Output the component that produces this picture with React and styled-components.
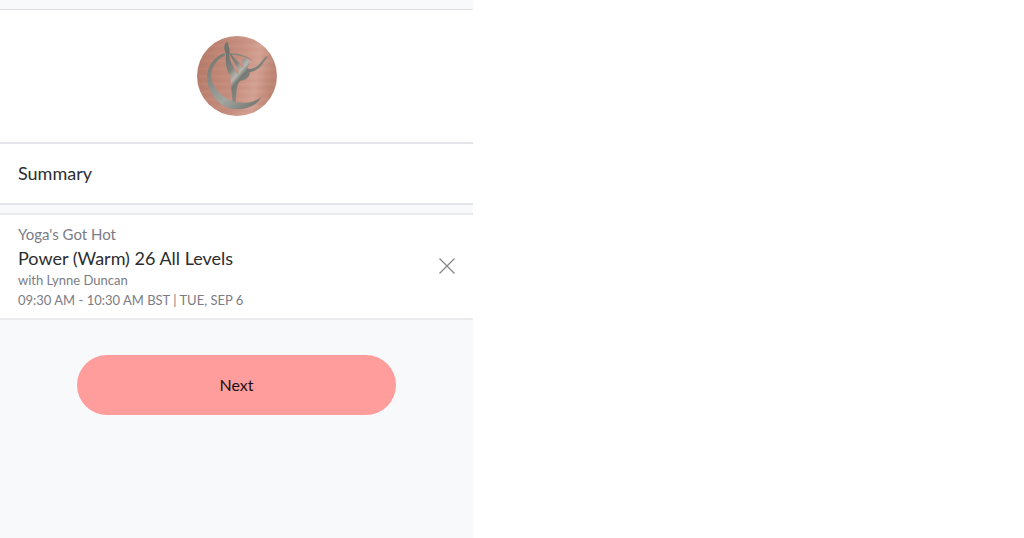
import React from 'react';
import styled, { createGlobalStyle } from 'styled-components';


const GlobalStyle = createGlobalStyle`
    body {
        margin: 0;
        background: #ffffff;
        font-family: Lato, "Open Sans", sans-serif;
        color: #2c2d30;
    }
`

const Page = styled.div`
    display: grid;
    grid-template-columns: minmax(320px, 46.2%) 1fr;
    min-height: 100vh;
`

const Checkout = styled.main`
    display: flex;
    flex-direction: column;
    padding-top: 9px;
    background: #f7f9fb;
`

const Header = styled.header`
    display: flex;
    justify-content: center;
    padding: 26px 18px;
    background: #ffffff;
    border-top: 1px solid #dcdee1;
    border-bottom: 2px solid #e3e5e8;
`

const Logo = styled.svg`
    display: block;
    width: 80px;
    height: 80px;
`

const Heading = styled.h1`
    margin: 0 0 8px;
    padding: 17px 18px 18px;
    background: #ffffff;
    border-bottom: 2px solid #e3e5e8;
    font-size: 18px;
    font-weight: 400;
    line-height: 24px;
`

const Booking = styled.section`
    display: flex;
    align-items: center;
    justify-content: space-between;
    padding: 7px 18px 8px;
    background: #ffffff;
    border-top: 2px solid #e8eaec;
    border-bottom: 2px solid #e8eaec;
`

const Studio = styled.p`
    margin: 0;
    color: #7b7c85;
    font-size: 15px;
    line-height: 24px;
`

const ClassName = styled.h2`
    margin: 0;
    font-size: 18px;
    font-weight: 400;
    line-height: 24px;
`

const Detail = styled.p`
    margin: 0;
    color: #7b7c85;
    font-size: 13px;
    line-height: 20px;
`

const RemoveButton = styled.button`
    display: flex;
    padding: 0;
    border: 0;
    background: none;
    color: #85868a;
    cursor: pointer;
`

const NextButton = styled.button`
    width: 67.4%;
    margin: 35px auto 0;
    padding: 18px;
    border: 0;
    border-radius: 30px;
    background: #ff9d9d;
    color: #1b1214;
    font-family: inherit;
    font-size: 16px;
    line-height: 24px;
    cursor: pointer;
    &:hover {
        background: #ff8f8f;
    }
`

function StudioLogo() {
    return (
        <Logo viewBox="30 31 240 240" role="img" aria-label="Yoga's Got Hot">
            <defs>
                <linearGradient id="copper" x1="0" y1="0" x2="1" y2="0.15">
                    <stop offset="0" stopColor="#b27866" />
                    <stop offset="0.3" stopColor="#c08675" />
                    <stop offset="0.55" stopColor="#c68f7f" />
                    <stop offset="0.8" stopColor="#d3a192" />
                    <stop offset="1" stopColor="#bd8573" />
                </linearGradient>
                <linearGradient id="steel" gradientUnits="userSpaceOnUse" x1="70" y1="90" x2="210" y2="250">
                    <stop offset="0" stopColor="#74766f" />
                    <stop offset="0.35" stopColor="#8e918b" />
                    <stop offset="0.6" stopColor="#a3a59f" />
                    <stop offset="0.8" stopColor="#8a8d87" />
                    <stop offset="1" stopColor="#6f726c" />
                </linearGradient>
                <linearGradient id="body" gradientUnits="userSpaceOnUse" x1="115" y1="100" x2="190" y2="165">
                    <stop offset="0" stopColor="#72756f" />
                    <stop offset="0.35" stopColor="#82857f" />
                    <stop offset="0.58" stopColor="#b6b8b1" />
                    <stop offset="0.72" stopColor="#777a74" />
                    <stop offset="1" stopColor="#858781" />
                </linearGradient>
                <pattern id="brushed" width="240" height="23" patternUnits="userSpaceOnUse">
                    <path d="M0 3H240" stroke="#7b4236" strokeOpacity="0.06" strokeWidth="3" />
                    <path d="M0 14H240" stroke="#ffe1d6" strokeOpacity="0.07" strokeWidth="4" />
                </pattern>
            </defs>
            <circle cx="150" cy="151" r="120" fill="url(#copper)" />
            <circle cx="150" cy="151" r="120" fill="url(#brushed)" />
            <path fill="url(#steel)" d="M113 82C86 91 66 114 61 145C57 180 75 219 108 240C144 261 205 252 225 212C203 232 160 239 124 221C91 204 69 172 73 141C77 117 93 99 114 90Z" />
            <path fill="#858780" d="M128 83C154 82 183 90 202 110C181 94 155 87 129 88Z" />
            <g fill="url(#body)">
                <path d="M112 70C111 60 114 51 120 49C126 52 123 60 128 72C126 84 127 93 130 103C134 117 143 130 149 143L163 164C152 170 151 181 149 194L146 229H137L133 190C133 174 130 163 131 150C117 136 115 109 117 87Z" />
                <path d="M124 74C134 91 146 100 154 109C160 116 161 125 166 127L170 124C174 120 168 116 166 111C164 103 170 98 177 99C184 99 187 105 186 111C187 118 184 121 181 125L185 130C199 132 216 119 225 106C230 100 232 94 242 91C243 96 236 102 231 109C220 128 205 137 188 140C189 152 180 160 164 165L146 155C152 147 157 141 154 132C148 118 133 101 124 74Z" />
            </g>
        </Logo>
    )
}

function App() {
    return (
        <Page>
            <GlobalStyle />
            <Checkout>
                <Header>
                    <StudioLogo />
                </Header>
                <Heading>Summary</Heading>
                <Booking>
                    <div>
                        <Studio>Yoga's Got Hot</Studio>
                        <ClassName>Power (Warm) 26 All Levels</ClassName>
                        <Detail>with Lynne Duncan</Detail>
                        <Detail>09:30 AM - 10:30 AM BST | TUE, SEP 6</Detail>
                    </div>
                    <RemoveButton type="button" aria-label="Remove class">
                        <svg width="16" height="16" viewBox="0 0 16 16" fill="none" stroke="currentColor" strokeWidth="1.3">
                            <path d="M0.5 0.5L15.5 15.5M15.5 0.5L0.5 15.5" />
                        </svg>
                    </RemoveButton>
                </Booking>
                <NextButton type="button">Next</NextButton>
            </Checkout>
        </Page>
    )
}

export default App;
